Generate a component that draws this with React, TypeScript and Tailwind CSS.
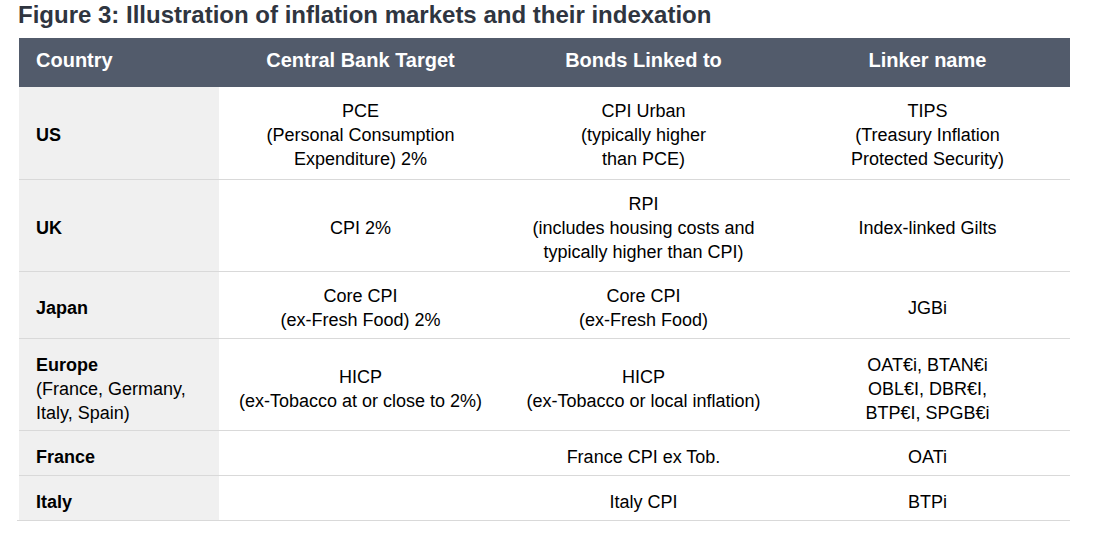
import React from "react";

type Row = {
  country: React.ReactNode;
  target: string[];
  bonds: string[];
  linker: string[];
  h: string;
  pt: string;
};

const rows: Row[] = [
  {
    country: <span className="font-bold">US</span>,
    target: ["PCE", "(Personal Consumption", "Expenditure) 2%"],
    bonds: ["CPI Urban", "(typically higher", "than PCE)"],
    linker: ["TIPS", "(Treasury Inflation", "Protected Security)"],
    h: "h-[93px]",
    pt: "pt-[4px]",
  },
  {
    country: <span className="font-bold">UK</span>,
    target: ["CPI 2%"],
    bonds: ["RPI", "(includes housing costs and", "typically higher than CPI)"],
    linker: ["Index-linked Gilts"],
    h: "h-[92px]",
    pt: "pt-[5px]",
  },
  {
    country: <span className="font-bold">Japan</span>,
    target: ["Core CPI", "(ex-Fresh Food) 2%"],
    bonds: ["Core CPI", "(ex-Fresh Food)"],
    linker: ["JGBi"],
    h: "h-[67px]",
    pt: "pt-[5px]",
  },
  {
    country: (
      <>
        <span className="block font-bold">Europe</span>
        <span className="block">(France, Germany,</span>
        <span className="block">Italy, Spain)</span>
      </>
    ),
    target: ["HICP", "(ex-Tobacco at or close to 2%)"],
    bonds: ["HICP", "(ex-Tobacco or local inflation)"],
    linker: ["OAT€i, BTAN€i", "OBL€I, DBR€I,", "BTP€I, SPGB€i"],
    h: "h-[92px]",
    pt: "pt-[8px]",
  },
  {
    country: <span className="font-bold">France</span>,
    target: [],
    bonds: ["France CPI ex Tob."],
    linker: ["OATi"],
    h: "h-[45px]",
    pt: "pt-[7px]",
  },
  {
    country: <span className="font-bold">Italy</span>,
    target: [],
    bonds: ["Italy CPI"],
    linker: ["BTPi"],
    h: "h-[45px]",
    pt: "pt-[7px]",
  },
];

function Cell({ lines, pt }: { lines: string[]; pt: string }) {
  return (
    <div className={`flex flex-col items-center justify-center text-center ${pt}`}>
      {lines.map((l, i) => (
        <span key={i} className="block whitespace-nowrap">
          {l}
        </span>
      ))}
    </div>
  );
}

export default function App() {
  return (
    <div
      className="w-[1095px] h-[544px] bg-white text-black"
      style={{ fontFamily: '"Liberation Sans", Arial, sans-serif' }}
    >
      <div className="pl-[18px] h-[38px] text-[24px] leading-[30px] font-bold text-[#2f3540] whitespace-nowrap">
        Figure 3: Illustration of inflation markets and their indexation
      </div>
      <div className="ml-[19px] w-[1051px]">
        <div className="grid grid-cols-[200px_283px_283px_285px] h-[49px] bg-[#525b6b] text-white font-bold text-[20px] leading-[24px] items-center pb-[5px]">
          <div className="pl-[17px]">Country</div>
          <div className="text-center">Central Bank Target</div>
          <div className="text-center">Bonds Linked to</div>
          <div className="text-center">Linker name</div>
        </div>
        {rows.map((r, i) => (
          <div
            key={i}
            className={`grid grid-cols-[200px_283px_283px_285px] text-[18px] leading-[24px] border-b border-[#d9d9d9] ${r.h} ${
              i === rows.length - 1 ? "-ml-[2px] pl-[2px]" : ""
            }`}
          >
            <div className={`bg-[#f0f0f0] pl-[17px] flex flex-col justify-center ${r.pt}`}>
              {r.country}
            </div>
            <Cell lines={r.target} pt={r.pt} />
            <Cell lines={r.bonds} pt={r.pt} />
            <Cell lines={r.linker} pt={r.pt} />
          </div>
        ))}
      </div>
    </div>
  );
}
